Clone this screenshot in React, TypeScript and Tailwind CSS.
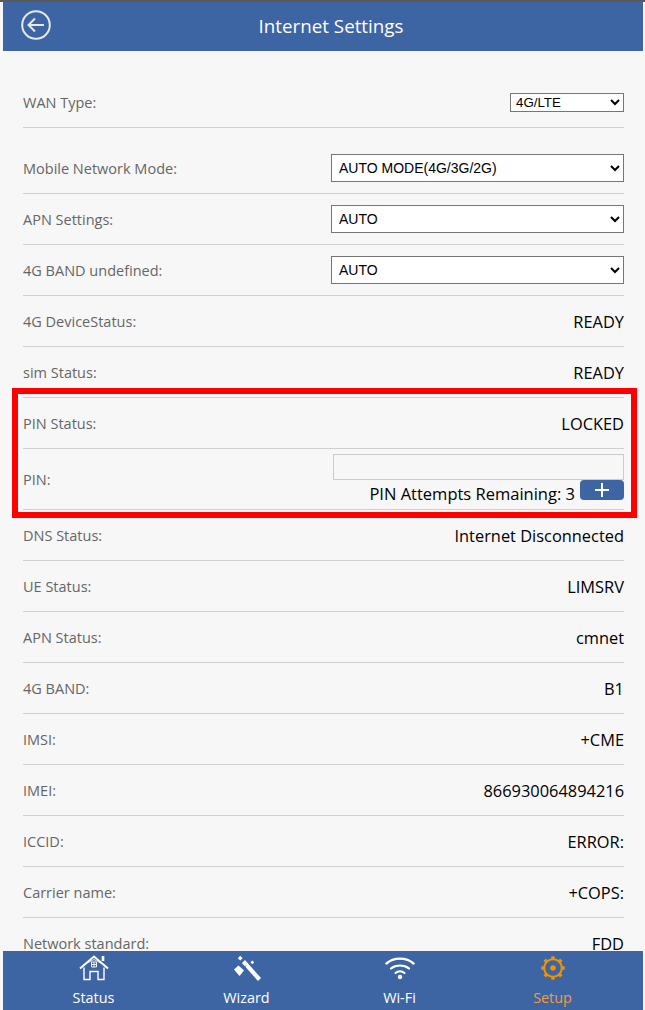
import React from "react";

const font = "font-['Open_Sans','Noto_Sans_CJK_SC',sans-serif]";

function Row({ label, children, tall }: { label: string; children?: React.ReactNode; tall?: boolean }) {
  return (
    <div className={`flex items-center justify-between border-b border-[#d0d0d0] ${tall ? "h-[61px]" : "h-[51px]"}`}>
      <span className="pt-[2px] text-[14.5px] text-[#666666]">{label}</span>
      {children}
    </div>
  );
}

function Value({ children }: { children: React.ReactNode }) {
  return <span className="pt-[2px] text-[16.4px] text-black">{children}</span>;
}

function Sel({ value }: { value: string }) {
  return (
    <select
      defaultValue={value}
      className="h-[28px] w-[293px] border border-[#767676] bg-white pl-[3px] font-['Liberation_Sans',sans-serif] text-[14px] text-black"
    >
      <option>{value}</option>
    </select>
  );
}

function Back() {
  return (
    <svg width="30" height="30" viewBox="0 0 30 30" fill="none" stroke="#e8e8e8" strokeWidth="2">
      <circle cx="15" cy="15" r="13.8" />
      <path d="M7 15h16M14 8.500 7.500 15l6.500 6.500" />
    </svg>
  );
}

function HomeIcon() {
  return (
    <svg width="30" height="26" viewBox="0 0 30 26" fill="none" stroke="white" strokeWidth="1.4">
      <path d="M1 13.500 15 1.500 29 13.500" strokeWidth="2" />
      <path d="M3.500 10.500 15 4.500 26.500 10.500" strokeWidth="0.8" />
      <path d="M5 12.500V24.500h6V16.500h8v8h6V12.500" />
      <path d="M12.500 7h5v5h-5zM15 7v5M12.500 9.500h5" strokeWidth="0.9" />
      <path d="M24 1v5" strokeWidth="2.600" />
    </svg>
  );
}

function WandIcon() {
  return (
    <svg width="30" height="26" viewBox="0 0 30 26" fill="white">
      <path d="M10 8l3-3 16 18-3 3z" />
      <path d="M14 10.500l-2 2" stroke="#3e65a3" strokeWidth="1" />
      <path d="M2 14.500l4.500-4 5.500 5-4.500 5.500z" />
      <rect x="6.500" y="1.500" width="3.400" height="3.400" transform="rotate(45 8.200 3.200)" />
      <rect x="19" y="6" width="2.600" height="2.600" transform="rotate(45 20.300 7.300)" />
    </svg>
  );
}

function WifiIcon() {
  return (
    <svg width="30" height="24" viewBox="0 0 30 24" fill="none" stroke="white" strokeLinecap="round">
      <path d="M1.500 7.500C8.500 1 21.500 1 28.500 7.500" strokeWidth="2.400" />
      <path d="M6 12.500c4.800-4 13.200-4 18 0" strokeWidth="2.200" />
      <path d="M10.500 17c2.600-2.200 6.400-2.200 9 0" strokeWidth="2" />
      <circle cx="15" cy="21" r="2.200" fill="white" stroke="none" />
    </svg>
  );
}

function GearIcon() {
  const teeth = [0, 45, 90, 135, 180, 225, 270, 315];
  return (
    <svg width="24" height="24" viewBox="0 0 24 24" fill="none" stroke="#f39200">
      <circle cx="12" cy="12" r="8.800" strokeWidth="2" />
      <circle cx="12" cy="12" r="2.800" fill="#f39200" stroke="none" />
      {teeth.map((a) => (
        <rect key={a} x="10.300" y="0.300" width="3.400" height="3" fill="#f39200" stroke="none" transform={`rotate(${a} 12 12)`} />
      ))}
    </svg>
  );
}

function Tab({ icon, label, active }: { icon: React.ReactNode; label: string; active?: boolean }) {
  return (
    <div className="flex flex-1 flex-col items-center">
      <div className="flex h-[34px] items-center">{icon}</div>
      <span className={`mt-[3px] text-[14.4px] leading-[20px] ${active ? "text-[#f39a45]" : "text-white"}`}>{label}</span>
    </div>
  );
}

export default function App() {
  return (
    <div className={`relative flex h-[1010px] w-[645px] flex-col overflow-hidden bg-[#f7f7f7] ${font}`}>
      <div className="h-[2px] shrink-0 bg-[#5a5a5a]" />
      <div className="flex min-h-0 flex-1 flex-col pl-[3px] pr-[2px]">
        <header className="relative flex h-[49px] shrink-0 items-center justify-center bg-[#3e65a3] pl-[16px]">
          <div className="absolute left-[18px] top-[8px]">
            <Back />
          </div>
          <h1 className="mb-[1px] text-[18.8px] text-white">Internet Settings</h1>
        </header>
        <main className="min-h-0 flex-1 overflow-hidden pl-[20px] pr-[19px] pt-[26px]">
          <Row label="WAN Type:">
            <select
              defaultValue="4G/LTE"
              className="h-[19px] w-[114px] border border-[#767676] bg-white pl-[1px] font-['Liberation_Sans',sans-serif] text-[13.3px] text-black"
            >
              <option>4G/LTE</option>
            </select>
          </Row>
          <div className="h-[15px]" />
          <Row label="Mobile Network Mode:"><Sel value="AUTO MODE(4G/3G/2G)" /></Row>
          <Row label="APN Settings:"><Sel value="AUTO" /></Row>
          <Row label="4G BAND undefined:"><Sel value="AUTO" /></Row>
          <Row label="4G DeviceStatus:"><Value>READY</Value></Row>
          <Row label="sim Status:"><Value>READY</Value></Row>
          <Row label="PIN Status:"><Value>LOCKED</Value></Row>
          <Row label="PIN:" tall>
            <div className="flex w-[291px] flex-col items-end">
              <input className="h-[26px] w-full border border-[#cccccc] bg-transparent" />
              <div className="flex items-start">
                <span className="pt-[3px] text-[16.5px] leading-[22px] text-black">PIN Attempts Remaining: 3</span>
                <button className="ml-[5px] flex h-[20px] w-[44px] items-center justify-center rounded-[4px] bg-[#3e65a3]">
                  <svg width="14" height="14" viewBox="0 0 14 14" stroke="white" strokeWidth="2"><path d="M7 0v14M0 7h14" /></svg>
                </button>
              </div>
            </div>
          </Row>
          <Row label="DNS Status:"><Value>Internet Disconnected</Value></Row>
          <Row label="UE Status:"><Value>LIMSRV</Value></Row>
          <Row label="APN Status:"><Value>cmnet</Value></Row>
          <Row label="4G BAND:"><Value>B1</Value></Row>
          <Row label="IMSI:"><Value>+CME</Value></Row>
          <Row label="IMEI:"><Value>866930064894216</Value></Row>
          <Row label="ICCID:"><Value>ERROR:</Value></Row>
          <Row label="Carrier name:"><Value>+COPS:</Value></Row>
          <Row label="Network standard:"><Value>FDD</Value></Row>
        </main>
        <nav className="flex h-[59px] shrink-0 bg-[#3e65a3] px-[14px]">
          <Tab icon={<HomeIcon />} label="Status" />
          <Tab icon={<WandIcon />} label="Wizard" />
          <Tab icon={<WifiIcon />} label="Wi-Fi" />
          <Tab icon={<GearIcon />} label="Setup" active />
        </nav>
      </div>
      <div className="pointer-events-none absolute left-[12px] top-[388px] h-[130px] w-[625px] border-[6px] border-[#ff0000]" />
    </div>
  );
}
